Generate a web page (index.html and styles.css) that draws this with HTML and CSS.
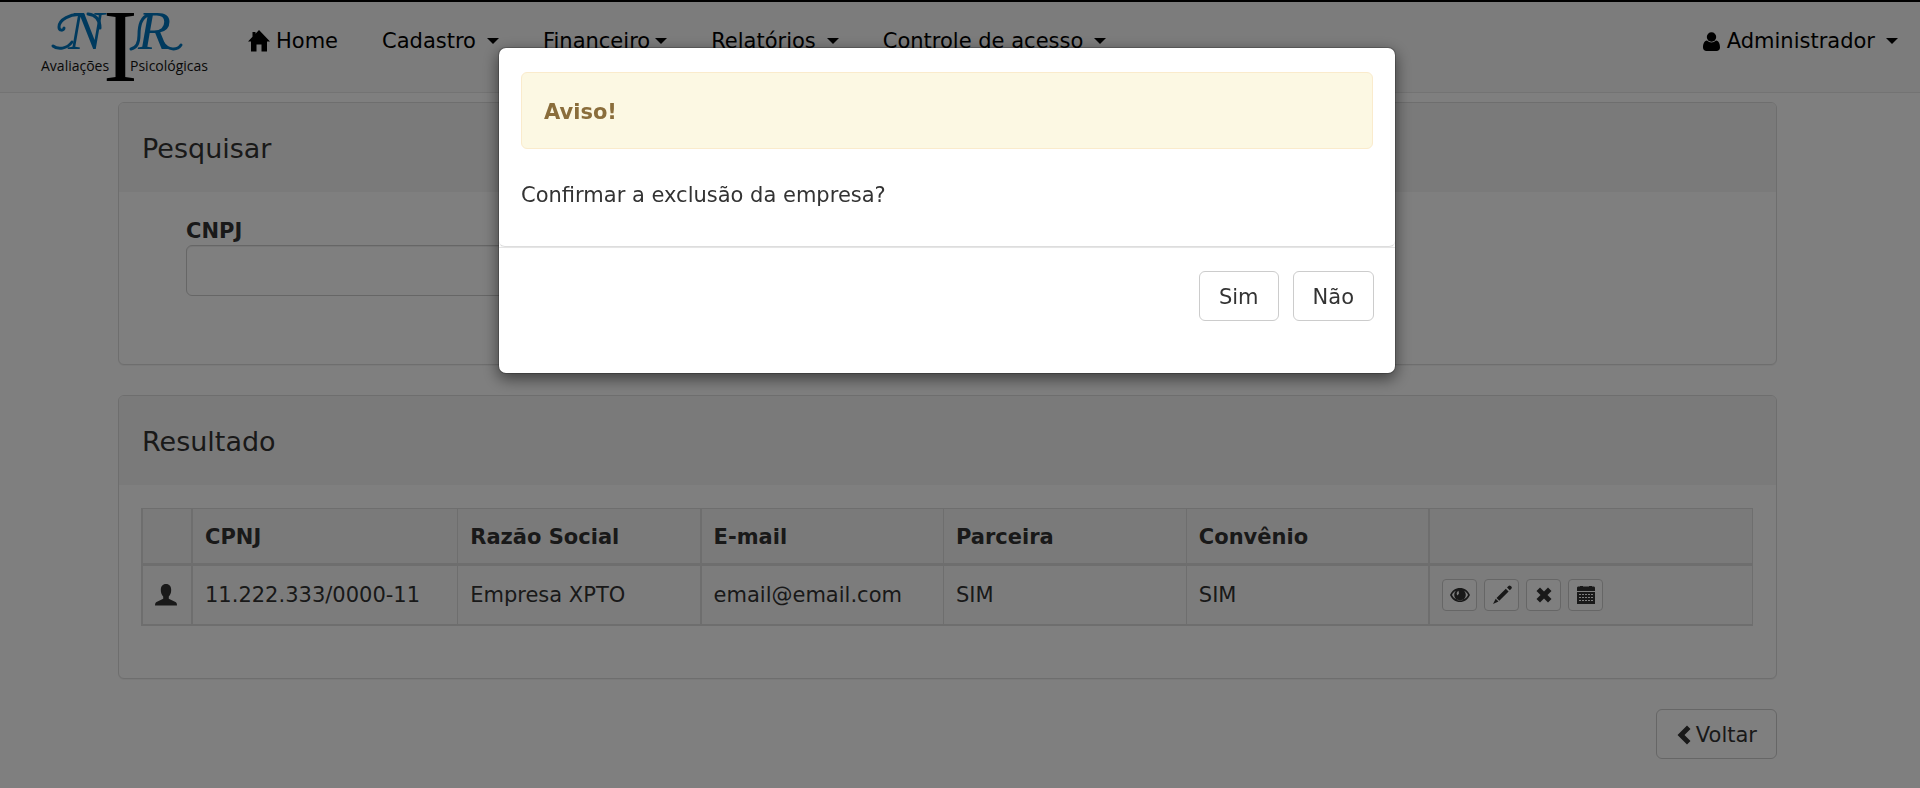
FILE: index.html
```html
<!DOCTYPE html>
<html lang="pt-BR">
<head>
<meta charset="utf-8">
<title>NIR - Empresas</title>
<link rel="stylesheet" href="styles.css">
</head>
<body>
<header class="navbar">
  <a class="brand" href="#" aria-label="NIR Avaliações Psicológicas">
    <svg class="logo" width="180" height="80" viewBox="36 6 180 80">
      <g class="logo-script">
        <text x="68" y="49">N</text>
        <text x="138" y="49">R</text>
      </g>
      <g class="logo-swash">
        <path d="M83 15C70 13 59 20 59 27c0 4 5 4 5 1"/>
        <path d="M72 42c-5 7-14 8-19 4"/>
        <path d="M148 15c-8 3-9 12-9 20 0 8-3 13-8 14"/>
        <path d="M163 43c5 7 14 8 18 2"/>
        <path d="M88 14c8 1 12 6 12 14"/>
      </g>
      <text class="logo-column" x="103" y="81">I</text>
      <text class="logo-name" x="41" y="71">Avaliações</text>
      <text class="logo-name" x="130" y="71">Psicológicas</text>
    </svg>
  </a>
  <nav class="menu">
    <a class="menu-item" href="#"><svg class="icon-home" width="22" height="22" viewBox="0 0 22 22"><path d="M11 0 22 11.5H19V21.500H13.500V14.500H8.500V21.500H3V11.500H0L4.500 6.800V2H7.500V3.700Z"/></svg>Home</a>
    <a class="menu-item" href="#">Cadastro <span class="caret spaced"></span></a>
    <a class="menu-item" href="#">Financeiro<span class="caret"></span></a>
    <a class="menu-item" href="#">Relatórios <span class="caret spaced"></span></a>
    <a class="menu-item" href="#">Controle de acesso <span class="caret spaced"></span></a>
  </nav>
  <a class="menu-item account" href="#"><svg class="icon-account" width="17" height="19" viewBox="0 0 17 19"><circle cx="8.500" cy="5" r="4.700"/><path d="M4 8.500C1 9 0 12 0 15.500 0 17.500 1.500 19 3.500 19h10c2 0 3.500-1.500 3.500-3.500 0-3.500-1-6.500-4-7-2.500 2.600-6.500 2.600-9 0Z"/></svg>Administrador <span class="caret spaced"></span></a>
</header>

<main class="content">
  <section class="panel">
    <h1 class="panel-heading">Pesquisar</h1>
    <form class="search">
      <label class="search-label" for="cnpj">CNPJ</label>
      <input class="search-input" id="cnpj" type="text">
    </form>
  </section>

  <section class="panel">
    <h2 class="panel-heading">Resultado</h2>
    <div class="result">
      <table class="grid">
        <colgroup>
          <col class="col-icon"><col class="col-cnpj"><col class="col-data"><col class="col-data"><col class="col-data"><col class="col-data"><col>
        </colgroup>
        <thead>
          <tr><th class="thick"></th><th>CPNJ</th><th class="thick">Razão Social</th><th>E-mail</th><th>Parceira</th><th class="thick">Convênio</th><th></th></tr>
        </thead>
        <tbody>
          <tr>
            <td class="thick"><svg class="icon-person" width="22" height="22" viewBox="0 0 22 22"><path d="M11 0C7.500 0 5.800 2.500 5.800 6c0 3 .9 5 2.400 6.500v2.300L1.500 18C.5 18.600 0 19.500 0 21.500h22c0-2-.5-2.900-1.500-3.500l-6.700-3.200v-2.300C15.300 11 16.200 9 16.200 6c0-3.500-1.700-6-5.200-6Z"/></svg></td>
            <td>11.222.333/0000-11</td>
            <td class="thick">Empresa XPTO</td>
            <td>email@email.com</td>
            <td>SIM</td>
            <td class="thick">SIM</td>
            <td>
              <div class="actions">
                <button class="btn-mini" type="button" aria-label="Visualizar"><svg width="20" height="18" viewBox="0 0 20 18"><path fill-rule="evenodd" d="M0 9C2 4.500 5.500 2 10 2s8 2.500 10 7c-2 4.500-5.500 7-10 7S2 13.500 0 9Zm2 0c1.500 3.300 4.500 5.200 8 5.200s6.500-1.900 8-5.200c-.8-1.900-2.200-3.400-3.800-4.200A5.800 5.800 0 1 1 5.800 4.800C4.200 5.600 2.800 7.100 2 9Zm6.500-4.200C6.600 5.600 6 8.200 7.500 9.500L9 7.500Z"/></svg></button>
                <button class="btn-mini" type="button" aria-label="Editar"><svg width="20" height="20" viewBox="0 0 20 20"><path d="M15 2.500 16.500 1c.7-.7 1.500-.7 2.200 0l.6.600c.7.700.7 1.500 0 2.200L17.800 5.300ZM13.800 3.700l2.800 2.800L7.300 15.800 4.500 13ZM3.700 13.800l2.800 2.800L1 19Z"/></svg></button>
                <button class="btn-mini" type="button" aria-label="Excluir"><svg width="18" height="18" viewBox="0 0 18 18"><path d="M5 1.500 9 5.500l4-4L16.500 5l-4 4 4 4-3.500 3.500-4-4-4 4L1.500 13l4-4-4-4Z"/></svg></button>
                <button class="btn-mini" type="button" aria-label="Agenda"><svg width="18" height="20" viewBox="0 0 18 20"><path d="M0 6V3c0-1 .6-1.500 1.500-1.500H3V1h3v.5h6V1h3v.5h1.500c.9 0 1.500.5 1.500 1.500v3Z"/><path fill-rule="evenodd" d="M0 7h18V19H0ZM2 9v1h2V9Zm3 0v1h2V9Zm3 0v1h2V9Zm3 0v1h2V9Zm3 0v1h2V9ZM2 12v1h2v-1Zm3 0v1h2v-1Zm3 0v1h2v-1Zm3 0v1h2v-1Zm3 0v1h2v-1ZM2 15v1h2v-1Zm3 0v1h2v-1Zm3 0v1h2v-1Zm3 0v1h2v-1Zm3 0v1h2v-1Z"/></svg></button>
              </div>
            </td>
          </tr>
        </tbody>
      </table>
    </div>
  </section>

  <div class="page-actions">
    <button class="btn" type="button"><svg class="icon-back" width="14" height="20" viewBox="0 0 14 20"><path d="M10 .5 13.500 4 7.500 10l6 6-3.500 3.500L.500 10Z"/></svg>Voltar</button>
  </div>
</main>

<div class="overlay">
  <div class="modal" role="dialog" aria-modal="true" aria-labelledby="aviso">
    <div class="modal-body">
      <div class="alert"><strong id="aviso">Aviso!</strong></div>
      <p class="question">Confirmar a exclusão da empresa?</p>
    </div>
    <div class="modal-footer">
      <button class="btn" type="button">Sim</button>
      <button class="btn" type="button">Não</button>
    </div>
  </div>
</div>
</body>
</html>
```

FILE: styles.css
```css
* { box-sizing: border-box; }

body {
  margin: 0;
  border-top: 2px solid #000;
  background: #fff;
  color: #333;
  font-family: Verdana, "DejaVu Sans", sans-serif;
  font-size: 21px;
  line-height: 30px;
}

svg { flex: none; fill: currentColor; }

/* Top bar */
.navbar {
  display: flex;
  align-items: flex-start;
  background: #f8f8f8;
  border-bottom: 1px solid #e7e7e7;
}
.brand { display: flex; width: 226px; height: 90px; padding: 4px 0 0 36px; }
.logo { overflow: visible; }
.menu { display: flex; }
.menu-item {
  display: flex;
  align-items: center;
  padding: 24px 22px 22px;
  color: #000;
  text-decoration: none;
  white-space: nowrap;
}
.account { margin-left: auto; }
.icon-home { margin-right: 6px; }
.icon-account { margin-right: 7px; }
.caret {
  margin-left: 5px;
  border-top: 6px solid;
  border-right: 6px solid transparent;
  border-left: 6px solid transparent;
}
.caret.spaced { margin-left: 11px; }

.logo-script { fill: #0074bc; font: italic 54px "Liberation Serif", serif; }
.logo-swash path { fill: none; stroke: #0074bc; stroke-width: 3; stroke-linecap: round; }
.logo-column { fill: #000; font: 104px "Liberation Serif", serif; }
.logo-name { fill: #111; font: 14px "Open Sans", sans-serif; }

/* Panels */
.content {
  display: flex;
  flex-direction: column;
  gap: 30px;
  padding: 9px 143px 26px 118px;
}
.panel {
  border: 1px solid #ddd;
  border-radius: 6px;
  background: #fff;
  box-shadow: 0 1px 1px rgba(0, 0, 0, .05);
}
.panel-heading {
  margin: 0;
  padding: 31px 23px 28px;
  background: #f5f5f5;
  border-radius: 5px 5px 0 0;
  font-size: 27px;
  font-weight: 400;
  line-height: 30px;
}
.search {
  display: flex;
  flex-direction: column;
  align-items: flex-start;
  padding: 25px 67px 68px;
}
.search-label { font-weight: 700; line-height: 28px; }
.search-input {
  width: 30%;
  height: 51px;
  padding: 9px 18px;
  border: 1px solid #ccc;
  border-radius: 6px;
  background: #fff;
  box-shadow: inset 0 1px 1px rgba(0, 0, 0, .075);
  color: #555;
  font: inherit;
}

/* Result table */
.result { padding: 23px 23px 52px 22px; }
.grid {
  width: 100%;
  table-layout: fixed;
  border-collapse: collapse;
  border: 1px solid #ddd;
  border-bottom-width: 2px;
  border-left-width: 2px;
  background: #f9f9f9;
}
.grid thead { background: #f5f5f5; }
.grid th, .grid td {
  padding: 13px 12px;
  border-right: 1px solid #ddd;
  text-align: left;
  white-space: nowrap;
}
.grid th { padding-bottom: 11px; border-bottom: 3px solid #ddd; }
.grid td { height: 59px; }
.grid .thick { border-right-width: 2px; }
.col-icon { width: 50px; }
.col-cnpj { width: 16.5%; }
.col-data { width: 15.08%; }
.icon-person { display: block; }
.actions { display: flex; gap: 7px; }
.btn-mini {
  display: flex;
  align-items: center;
  justify-content: center;
  width: 35px;
  height: 32px;
  padding: 0;
  border: 1px solid #ccc;
  border-radius: 4px;
  background: #fff;
  color: #333;
}

.page-actions { display: flex; justify-content: flex-end; }
.btn {
  display: flex;
  align-items: center;
  padding: 10px 19px 8px;
  border: 1px solid #ccc;
  border-radius: 6px;
  background: #fff;
  color: #333;
  font: inherit;
}
.icon-back { margin: 0 5px 0 1px; }

/* Confirmation dialog */
.overlay {
  position: fixed;
  inset: 0;
  display: flex;
  align-items: flex-start;
  justify-content: center;
  padding: 47px 26px 47px 0;
  background: rgba(0, 0, 0, .5);
}
.modal {
  width: 100%;
  max-width: 898px;
  border: 1px solid rgba(0, 0, 0, .2);
  border-radius: 8px;
  background: #fff;
  background-clip: padding-box;
  box-shadow: 0 5px 15px rgba(0, 0, 0, .5);
}
.modal-body {
  padding: 24px 22px 36px;
  border-bottom: 1px solid #ddd;
  border-radius: 6px;
  box-shadow: 0 1px 1px rgba(0, 0, 0, .05);
}
.alert {
  padding: 24px 22px 21px;
  border: 1px solid #faebcc;
  border-radius: 6px;
  background: #fcf8e3;
  color: #8a6d3b;
}
.question { margin: 31px 0 0; }
.modal-footer {
  display: flex;
  justify-content: flex-end;
  gap: 14px;
  padding: 23px 21px 52px;
  border-top: 1px solid #e5e5e5;
}
```
